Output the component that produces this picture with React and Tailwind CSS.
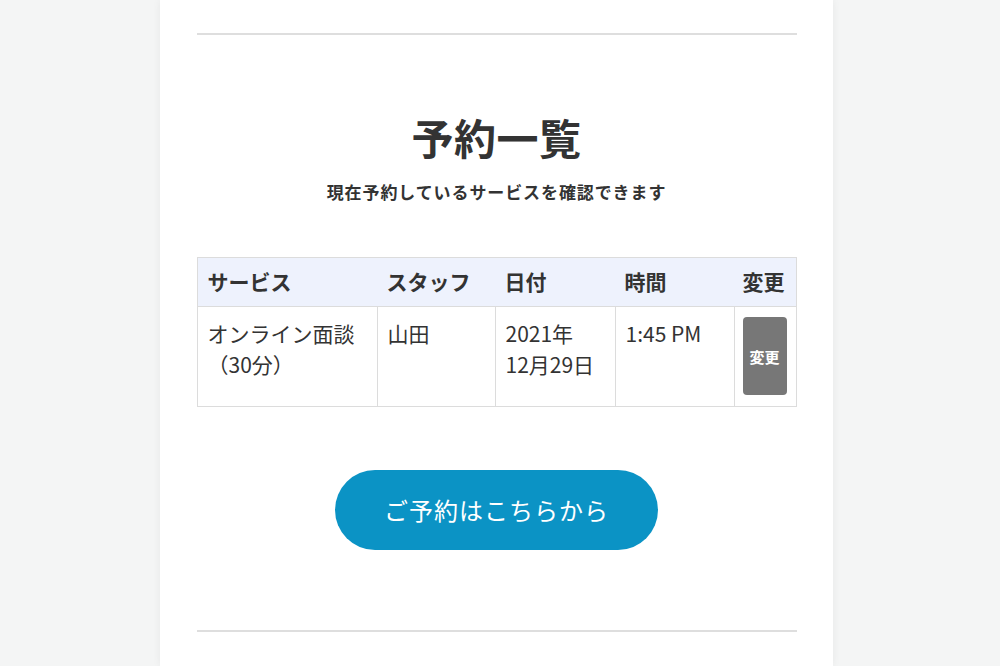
export default function App() {
  const font = { fontFamily: '"Noto Sans CJK JP", "Noto Sans", sans-serif' };
  return (
    <div className="w-[1000px] h-[666px] overflow-hidden bg-[#f4f5f5] flex" style={font}>
      <div className="ml-[160px] w-[673px] h-full bg-white shadow-[0_0_8px_rgba(0,0,0,0.06)] flex flex-col items-center pt-[33px]">
        <div className="w-[600px] h-[2px] bg-[#dedede]" />
        <h1 className="mt-[72px] text-[42px] leading-[60px] font-bold text-[#333] tracking-[0.5px]">予約一覧</h1>
        <p className="mt-[14px] text-[17px] leading-[22px] font-bold text-[#333] tracking-[0.9px]">現在予約しているサービスを確認できます</p>
        <div className="mt-[54px] w-[600px] border border-[#dcdcdc] text-[#333]">
          <div className="flex h-[49px] bg-[#eef2fd] border-b border-[#dcdcdc] text-[21px] font-bold items-center">
            <div className="w-[179px] pl-[10px]">サービス</div>
            <div className="w-[118px] pl-[10px]">スタッフ</div>
            <div className="w-[120px] pl-[10px]">日付</div>
            <div className="w-[119px] pl-[10px]">時間</div>
            <div className="flex-1 pl-[9px]">変更</div>
          </div>
          <div className="flex h-[99px] text-[21px] leading-[31px]">
            <div className="w-[179px] pl-[10px] pt-[11px]">オンライン面談<br />（30分）</div>
            <div className="w-[118px] pl-[10px] pt-[11px] border-l border-[#dcdcdc]">山田</div>
            <div className="w-[120px] pl-[10px] pt-[11px] border-l border-[#dcdcdc]">2021年<br />12月29日</div>
            <div className="w-[119px] pl-[10px] pt-[11px] border-l border-[#dcdcdc]">1:45 PM</div>
            <div className="flex-1 border-l border-[#dcdcdc] pl-[8px] pt-[10px]">
              <div className="w-[44px] h-[78px] rounded-[4px] bg-[#777] text-white text-[15px] font-bold flex items-center justify-center">変更</div>
            </div>
          </div>
        </div>
        <button className="mt-[63px] w-[323px] h-[80px] rounded-full bg-[#0b93c5] text-white text-[24px] tracking-[1px]">ご予約はこちらから</button>
        <div className="mt-[80px] w-[600px] h-[2px] bg-[#dedede]" />
      </div>
    </div>
  );
}
